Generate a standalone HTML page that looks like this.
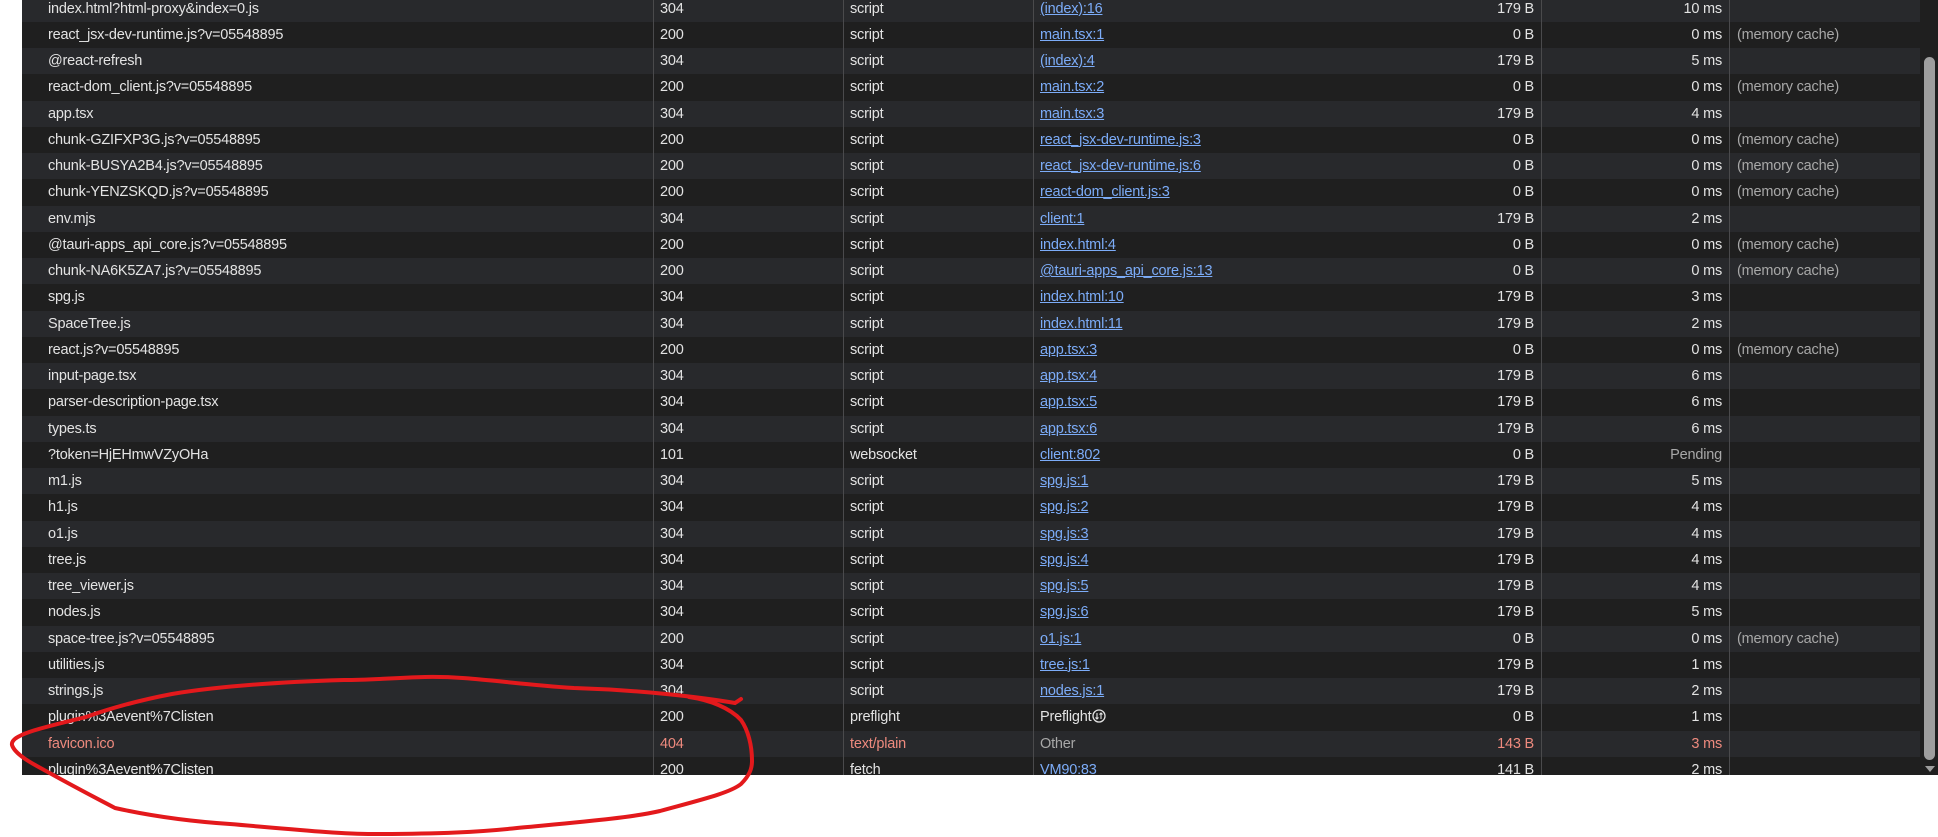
<!DOCTYPE html>
<html><head><meta charset="utf-8"><style>
body{margin:0;width:1938px;height:837px;background:#fff;overflow:hidden;position:relative;font-family:"Liberation Sans",sans-serif;}
#t{position:absolute;left:22px;top:0;width:1898px;height:775px;overflow:hidden;background:#1f1f1f;}
.r{position:absolute;left:0;width:1898px;height:26.25px;font-size:14.5px;line-height:26.25px;color:#e3e3e3;letter-spacing:-0.2px}
.r:nth-child(odd){background:#28292c}
.r:nth-child(even){background:#1f1f1f}
.r span{position:absolute;top:0;white-space:nowrap}
.n{left:26px}.s{left:638px}.ty{left:828px}.i{left:1018px}
.sz{right:386px}.tm{right:198px}.c{left:1715px;color:#a8a8a8}
a{color:#7cacf8;text-decoration:underline}
.e{color:#ee8a7e}.g{color:#a8a8a8}
.v{position:absolute;top:0;height:775px;width:1px;background:#4a4a4c}
#sb{position:absolute;left:1920px;top:0;width:18px;height:775px;background:#1f1f1f}
#th{position:absolute;left:4px;top:57px;width:11px;height:703px;background:#9e9e9e;border-radius:6px}
#dn{position:absolute;left:5px;top:766px;width:0;height:0;border-left:5px solid transparent;border-right:5px solid transparent;border-top:6px solid #9e9e9e}
</style></head><body>
<div id="t">
<div class="r" style="top:-4.5px"><span class="n">index.html?html-proxy&amp;index=0.js</span><span class="s">304</span><span class="ty">script</span><span class="i"><a>(index):16</a></span><span class="sz">179 B</span><span class="tm">10 ms</span></div>
<div class="r" style="top:21.75px"><span class="n">react_jsx-dev-runtime.js?v=05548895</span><span class="s">200</span><span class="ty">script</span><span class="i"><a>main.tsx:1</a></span><span class="sz">0 B</span><span class="tm">0 ms</span><span class="c">(memory cache)</span></div>
<div class="r" style="top:48px"><span class="n">@react-refresh</span><span class="s">304</span><span class="ty">script</span><span class="i"><a>(index):4</a></span><span class="sz">179 B</span><span class="tm">5 ms</span></div>
<div class="r" style="top:74.25px"><span class="n">react-dom_client.js?v=05548895</span><span class="s">200</span><span class="ty">script</span><span class="i"><a>main.tsx:2</a></span><span class="sz">0 B</span><span class="tm">0 ms</span><span class="c">(memory cache)</span></div>
<div class="r" style="top:100.5px"><span class="n">app.tsx</span><span class="s">304</span><span class="ty">script</span><span class="i"><a>main.tsx:3</a></span><span class="sz">179 B</span><span class="tm">4 ms</span></div>
<div class="r" style="top:126.75px"><span class="n">chunk-GZIFXP3G.js?v=05548895</span><span class="s">200</span><span class="ty">script</span><span class="i"><a>react_jsx-dev-runtime.js:3</a></span><span class="sz">0 B</span><span class="tm">0 ms</span><span class="c">(memory cache)</span></div>
<div class="r" style="top:153px"><span class="n">chunk-BUSYA2B4.js?v=05548895</span><span class="s">200</span><span class="ty">script</span><span class="i"><a>react_jsx-dev-runtime.js:6</a></span><span class="sz">0 B</span><span class="tm">0 ms</span><span class="c">(memory cache)</span></div>
<div class="r" style="top:179.25px"><span class="n">chunk-YENZSKQD.js?v=05548895</span><span class="s">200</span><span class="ty">script</span><span class="i"><a>react-dom_client.js:3</a></span><span class="sz">0 B</span><span class="tm">0 ms</span><span class="c">(memory cache)</span></div>
<div class="r" style="top:205.5px"><span class="n">env.mjs</span><span class="s">304</span><span class="ty">script</span><span class="i"><a>client:1</a></span><span class="sz">179 B</span><span class="tm">2 ms</span></div>
<div class="r" style="top:231.75px"><span class="n">@tauri-apps_api_core.js?v=05548895</span><span class="s">200</span><span class="ty">script</span><span class="i"><a>index.html:4</a></span><span class="sz">0 B</span><span class="tm">0 ms</span><span class="c">(memory cache)</span></div>
<div class="r" style="top:258px"><span class="n">chunk-NA6K5ZA7.js?v=05548895</span><span class="s">200</span><span class="ty">script</span><span class="i"><a>@tauri-apps_api_core.js:13</a></span><span class="sz">0 B</span><span class="tm">0 ms</span><span class="c">(memory cache)</span></div>
<div class="r" style="top:284.25px"><span class="n">spg.js</span><span class="s">304</span><span class="ty">script</span><span class="i"><a>index.html:10</a></span><span class="sz">179 B</span><span class="tm">3 ms</span></div>
<div class="r" style="top:310.5px"><span class="n">SpaceTree.js</span><span class="s">304</span><span class="ty">script</span><span class="i"><a>index.html:11</a></span><span class="sz">179 B</span><span class="tm">2 ms</span></div>
<div class="r" style="top:336.75px"><span class="n">react.js?v=05548895</span><span class="s">200</span><span class="ty">script</span><span class="i"><a>app.tsx:3</a></span><span class="sz">0 B</span><span class="tm">0 ms</span><span class="c">(memory cache)</span></div>
<div class="r" style="top:363px"><span class="n">input-page.tsx</span><span class="s">304</span><span class="ty">script</span><span class="i"><a>app.tsx:4</a></span><span class="sz">179 B</span><span class="tm">6 ms</span></div>
<div class="r" style="top:389.25px"><span class="n">parser-description-page.tsx</span><span class="s">304</span><span class="ty">script</span><span class="i"><a>app.tsx:5</a></span><span class="sz">179 B</span><span class="tm">6 ms</span></div>
<div class="r" style="top:415.5px"><span class="n">types.ts</span><span class="s">304</span><span class="ty">script</span><span class="i"><a>app.tsx:6</a></span><span class="sz">179 B</span><span class="tm">6 ms</span></div>
<div class="r" style="top:441.75px"><span class="n">?token=HjEHmwVZyOHa</span><span class="s">101</span><span class="ty">websocket</span><span class="i"><a>client:802</a></span><span class="sz">0 B</span><span class="tm g">Pending</span></div>
<div class="r" style="top:468px"><span class="n">m1.js</span><span class="s">304</span><span class="ty">script</span><span class="i"><a>spg.js:1</a></span><span class="sz">179 B</span><span class="tm">5 ms</span></div>
<div class="r" style="top:494.25px"><span class="n">h1.js</span><span class="s">304</span><span class="ty">script</span><span class="i"><a>spg.js:2</a></span><span class="sz">179 B</span><span class="tm">4 ms</span></div>
<div class="r" style="top:520.5px"><span class="n">o1.js</span><span class="s">304</span><span class="ty">script</span><span class="i"><a>spg.js:3</a></span><span class="sz">179 B</span><span class="tm">4 ms</span></div>
<div class="r" style="top:546.75px"><span class="n">tree.js</span><span class="s">304</span><span class="ty">script</span><span class="i"><a>spg.js:4</a></span><span class="sz">179 B</span><span class="tm">4 ms</span></div>
<div class="r" style="top:573px"><span class="n">tree_viewer.js</span><span class="s">304</span><span class="ty">script</span><span class="i"><a>spg.js:5</a></span><span class="sz">179 B</span><span class="tm">4 ms</span></div>
<div class="r" style="top:599.25px"><span class="n">nodes.js</span><span class="s">304</span><span class="ty">script</span><span class="i"><a>spg.js:6</a></span><span class="sz">179 B</span><span class="tm">5 ms</span></div>
<div class="r" style="top:625.5px"><span class="n">space-tree.js?v=05548895</span><span class="s">200</span><span class="ty">script</span><span class="i"><a>o1.js:1</a></span><span class="sz">0 B</span><span class="tm">0 ms</span><span class="c">(memory cache)</span></div>
<div class="r" style="top:651.75px"><span class="n">utilities.js</span><span class="s">304</span><span class="ty">script</span><span class="i"><a>tree.js:1</a></span><span class="sz">179 B</span><span class="tm">1 ms</span></div>
<div class="r" style="top:678px"><span class="n">strings.js</span><span class="s">304</span><span class="ty">script</span><span class="i"><a>nodes.js:1</a></span><span class="sz">179 B</span><span class="tm">2 ms</span></div>
<div class="r" style="top:704.25px"><span class="n">plugin%3Aevent%7Clisten</span><span class="s">200</span><span class="ty">preflight</span><span class="i">Preflight <svg width="14" height="14" viewBox="0 0 14 14" style="vertical-align:-2px;margin-left:-3px"><circle cx="7" cy="7" r="6" fill="none" stroke="#e3e3e3" stroke-width="1.3"/><path d="M5 4v6M3.5 8.5L5 10 6.5 8.5M9 10V4M7.5 5.5L9 4l1.5 1.5" fill="none" stroke="#e3e3e3" stroke-width="1.1"/></svg></span><span class="sz">0 B</span><span class="tm">1 ms</span></div>
<div class="r e" style="top:730.5px"><span class="n">favicon.ico</span><span class="s">404</span><span class="ty">text/plain</span><span class="i g">Other</span><span class="sz">143 B</span><span class="tm">3 ms</span></div>
<div class="r" style="top:756.75px"><span class="n">plugin%3Aevent%7Clisten</span><span class="s">200</span><span class="ty">fetch</span><span class="i"><a>VM90:83</a></span><span class="sz">141 B</span><span class="tm">2 ms</span></div>
<div class="v" style="left:631px"></div>
<div class="v" style="left:821px"></div>
<div class="v" style="left:1011px"></div>
<div class="v" style="left:1519px"></div>
<div class="v" style="left:1707px"></div>
</div>
<div id="sb"><div id="th"></div><div id="dn"></div></div>
<svg width="1938" height="837" style="position:absolute;left:0;top:0">
<path d="M741,699 L735,703 C700,697 640,690 574,688 C510,684 470,676 425,677 C390,678 370,680 344,680 C280,682 220,686 172,694 C130,702 100,712 86,717 C40,728 10,735 12,745 C15,755 35,765 46,771 C80,790 100,800 115,808 C160,818 200,822 230,824 C300,830 340,834 373,834 C440,834 480,832 517,828 C580,822 630,818 660,811 C700,800 730,793 741,784 C750,775 752,768 752,761 C752,745 748,730 741,720 C730,708 710,700 689,697" fill="none" stroke="#e3191c" stroke-width="4" stroke-linecap="round"/>
</svg>
</body></html>
